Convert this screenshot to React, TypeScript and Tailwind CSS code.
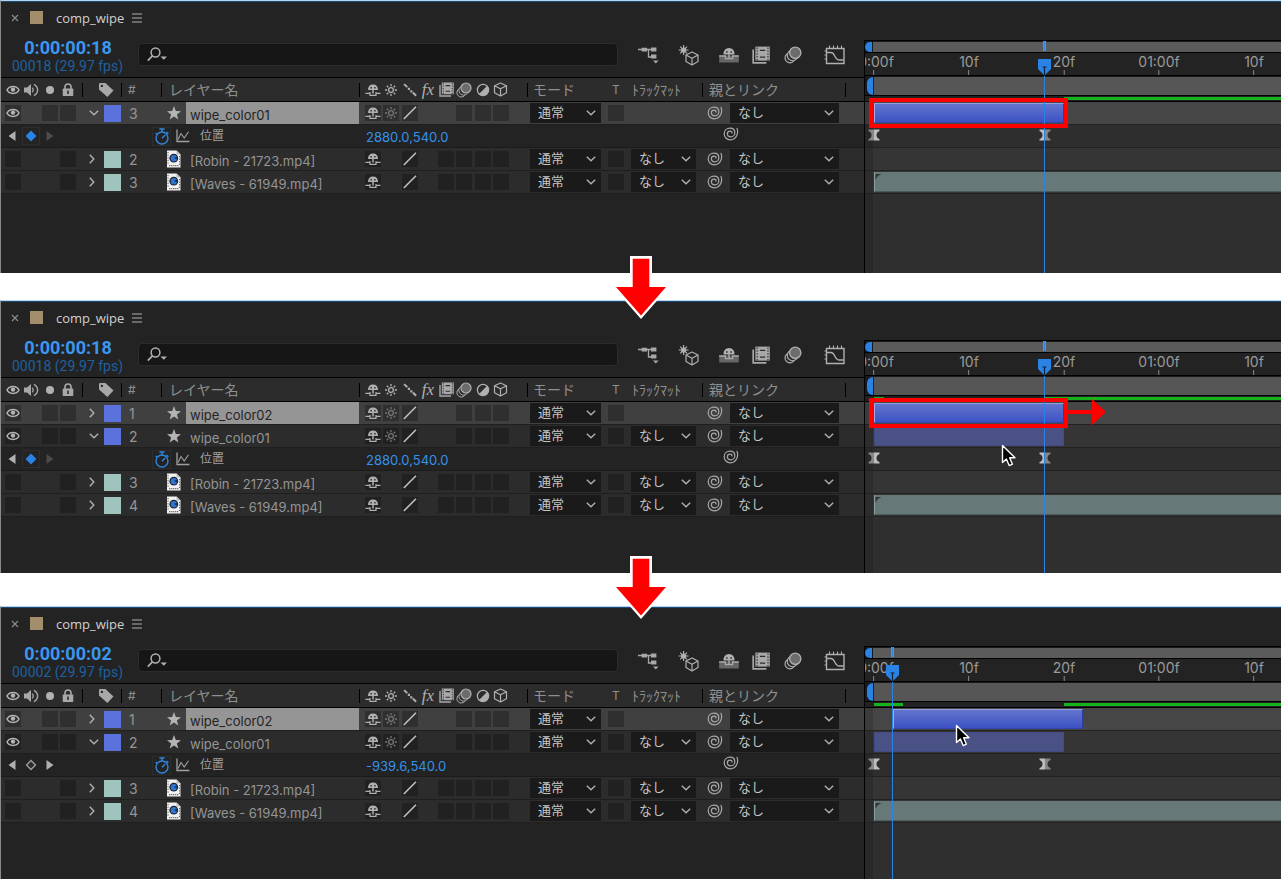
import type { CSSProperties, ReactNode } from "react"

type Layer = {
  index: number
  name: string
  kind: "shape" | "video"
  selected?: boolean
  open?: boolean
  matte?: boolean
  bar?: [number, number]
  position?: string
  onKey?: boolean
}

type Comp = {
  id: string
  time: string
  frame: string
  playhead: number
  layers: Layer[]
  cached: [number, number][]
  overlay?: ReactNode
}

// one frame is 9.5px wide, frame zero sits 9px from the edge of the time area
const FRAME = 9.5
const ORIGIN = 9
const at = (frame: number) => ORIGIN + frame * FRAME

const EyeIcon = () => (
  <svg width="14" height="12" viewBox="0 0 14 12" fill="none">
    <path d="M1 6C3.4 1.4 10.6 1.4 13 6 10.6 10.6 3.4 10.6 1 6Z" stroke="#b4b4b4" strokeWidth="1.5" />
    <circle cx="7" cy="5.6" r="2.2" fill="#b4b4b4" />
  </svg>
)

const SpeakerIcon = () => (
  <svg width="16" height="14" viewBox="0 0 16 14" fill="none" stroke="#a8a8a8">
    <path d="M1 4.5H4L8 1V13L4 9.5H1Z" fill="#a8a8a8" stroke="none" />
    <path d="M9.5 4.6Q11 7 9.5 9.4" strokeWidth="1.3" />
    <path d="M11 1.4Q14.6 3.6 14.6 7T11 12.6" strokeWidth="1.4" />
  </svg>
)

const LockIcon = () => (
  <svg width="12" height="14" viewBox="0 0 12 14" fill="none">
    <path d="M3 6V4A3 3 0 0 1 9 4V6" stroke="#a8a8a8" strokeWidth="1.6" />
    <rect x="0.7" y="5.5" width="10.6" height="7.5" rx="0.8" fill="#a8a8a8" />
    <path d="M6 7.5V11" stroke="#2c2c2c" strokeWidth="1.6" />
  </svg>
)

const TagIcon = () => (
  <svg width="16" height="16" viewBox="0 0 16 16">
    <path d="M1 2.2Q1 1 2.2 1H7.4L15.5 8.6 9.4 15 1 7.6Z" fill="#a8a8a8" />
    <circle cx="3.9" cy="3.9" r="1.2" fill="#2c2c2c" />
  </svg>
)

const StarIcon = () => (
  <svg width="14" height="14" viewBox="0 0 14 14">
    <path d="M7 0 8.8 4.9 14 5.2 9.9 8.4 11.3 13.5 7 10.6 2.7 13.5 4.1 8.4 0 5.2 5.2 4.9Z" fill="#b4b4b4" />
  </svg>
)

const VideoIcon = () => (
  <svg width="14" height="18" viewBox="0 0 14 18">
    <path d="M0 0.5H9.5L13.5 4.5V17.5H0Z" fill="#f2f2f2" />
    <path d="M9.5 0.5V4.5H13.5" fill="#bdbdbd" />
    <path d="M1 2V15M12.6 6V15" stroke="#555" strokeWidth="1" strokeDasharray="1.2 1.4" />
    <circle cx="6.8" cy="8.2" r="4.4" fill="#20242c" />
    <circle cx="6.9" cy="8.2" r="3.2" fill="#2f74d0" />
    <path d="M7 8 10.2 6.6V9.8Z" fill="#16335f" />
    <path d="M2 15.6H11.5" stroke="#777" strokeWidth="1.2" strokeDasharray="1.4 0.6" />
  </svg>
)

const ShyIcon = () => (
  <svg width="16" height="14" viewBox="0 0 16 14" fill="none" stroke="#b0b0b0">
    <path d="M3 7Q3 1.4 8 1.4T13 7Z" fill="#b0b0b0" stroke="none" />
    <path d="M5.4 4.8H6.8M9.2 4.8H10.6" stroke="#2a2a2a" strokeWidth="1.4" />
    <path d="M8 7V10.6" strokeWidth="1.5" />
    <path d="M0.5 10.4H5V9M15.5 10.4H11V9M5 10V12.4H11V10" strokeWidth="1.2" />
  </svg>
)

const SunIcon = ({ dim }: { dim?: boolean }) => (
  <svg width="14" height="14" viewBox="0 0 14 14" fill="none" stroke={dim ? "#757575" : "#b0b0b0"} strokeWidth="1.3">
    <circle cx="7" cy="7" r="2.4" />
    <path d="M7 1V3.2M7 10.8V13M1 7H3.2M10.8 7H13M2.8 2.8 4.3 4.3M9.7 9.7 11.2 11.2M11.2 2.8 9.7 4.3M4.3 9.7 2.8 11.2" />
  </svg>
)

const DottedIcon = () => (
  <svg width="14" height="14" viewBox="0 0 14 14" fill="#b0b0b0">
    <path d="M0.4 1.8 1.8 0.4 5 3.4 3.6 4.8ZM4.8 4.8H7V7H4.8ZM7.2 7.2H9.4V9.4H7.2ZM9.2 10.2 10.6 8.8 13.8 12 12.4 13.4Z" />
  </svg>
)

const SlashIcon = () => (
  <svg width="14" height="14" viewBox="0 0 14 14">
    <path d="M0.8 13 13 0.8" stroke="#c0c0c0" strokeWidth="1.6" />
  </svg>
)

const FilmIcon = ({ size = 15 }: { size?: number }) => (
  <svg width={size} height={size} viewBox="0 0 15 15" fill="none">
    <path d="M1 3V14H12" stroke="#a8a8a8" strokeWidth="1.4" />
    <rect x="2.8" y="0.5" width="12" height="11.7" fill="#a8a8a8" />
    <path d="M4.3 1.2V12M13.3 1.2V12" stroke="#2c2c2c" strokeWidth="0.9" strokeDasharray="1.2 1.2" />
    <path d="M6.6 3.6H11M6.6 9.2H11" stroke="#2c2c2c" strokeWidth="1.1" />
  </svg>
)

const BlurIcon = ({ size = 16 }: { size?: number }) => (
  <svg width={size} height={size} viewBox="0 0 16 16" fill="none" stroke="#b0b0b0">
    <circle cx="5.3" cy="10.6" r="4.4" fill="#2c2c2c" strokeWidth="1" />
    <circle cx="7.6" cy="8.4" r="4.7" fill="#2c2c2c" strokeWidth="1" />
    <circle cx="10" cy="6" r="5" fill="#6c6c6c" strokeWidth="1.2" />
  </svg>
)

const HalfIcon = () => (
  <svg width="14" height="14" viewBox="0 0 14 14">
    <circle cx="7" cy="7" r="5.6" fill="none" stroke="#b0b0b0" strokeWidth="1.3" />
    <path d="M11 3A5.6 5.6 0 0 1 3 11Z" fill="#b0b0b0" />
  </svg>
)

const CubeIcon = () => (
  <svg width="15" height="15" viewBox="0 0 15 15" fill="none" stroke="#b0b0b0" strokeWidth="1.2" strokeLinejoin="round">
    <path d="M7.5 1 13.5 3.8V10.8L7.5 14 1.5 10.8V3.8ZM1.5 3.8 7.5 6.8 13.5 3.8M7.5 6.8V14" />
  </svg>
)

const SpiralIcon = () => (
  <svg width="16" height="16" viewBox="0 0 16 16" fill="none" stroke="#a8a8a8" strokeWidth="1.2" strokeLinecap="round">
    <path d="M14 2.4C15.8 7 13.4 13.8 7.4 13.8 3.6 13.8 1.2 11 1.2 7.8 1.2 4.4 3.8 2.2 7 2.2 10 2.2 11.8 4.2 11.8 6.7 11.8 9.2 10 10.8 7.8 10.8 5.8 10.8 4.4 9.5 4.4 7.8 4.4 6.3 5.5 5.2 7 5.2 8.3 5.2 9 6 9 7" />
  </svg>
)

const StopwatchIcon = () => (
  <svg width="16" height="17" viewBox="0 0 16 17" fill="none" stroke="#2f86dc">
    <circle cx="8" cy="10" r="6" strokeWidth="1.4" />
    <path d="M8 10.2 11.2 7M5.4 1H10.6M8 1V4M12.4 4 14.4 5.8M2.8 5 1.6 6" strokeWidth="1.4" />
  </svg>
)

const CurveIcon = () => (
  <svg width="14" height="14" viewBox="0 0 14 14" fill="none" stroke="#a0a0a0">
    <path d="M1 0.5V12.5H13.5" strokeWidth="1.3" />
    <path d="M2 10.5 5 4.5 8.2 9 12.5 2.8" strokeWidth="1.1" />
  </svg>
)

const Chevron = ({ className = "" }: { className?: string }) => (
  <svg width="10" height="6" viewBox="0 0 10 6" className={className} fill="none" stroke="#b0b0b0" strokeWidth="1.4">
    <path d="M0.8 0.8 5 4.8 9.2 0.8" />
  </svg>
)

const FlowchartIcon = () => (
  <svg width="22" height="20" viewBox="0 0 22 20" fill="none" stroke="#a8a8a8">
    <path d="M0 4.5H7M9 4.5H14M10.5 5V12H14" strokeWidth="1.3" />
    <path d="M3.6 2.8H9V6.4H3.6ZM13 2.6H18.4V6.6H13ZM13 9.6H18.4V13.6H13Z" fill="#a8a8a8" stroke="none" />
    <path d="M15 15.4H20.6L17.8 18.4Z" fill="#a8a8a8" stroke="none" />
  </svg>
)

const DraftIcon = () => (
  <svg width="22" height="22" viewBox="0 0 22 22" fill="none" stroke="#b0b0b0" strokeWidth="1.2" strokeLinejoin="round">
    <path d="M14 8 20 11V17.6L14 21 8 17.6V11ZM8 11 14 14.2 20 11M14 14.2V21" />
    <circle cx="5.6" cy="6" r="2.6" fill="#b0b0b0" stroke="none" />
    <path d="M5.6 1V11M0.6 6H10.6M2.2 2.6 9 9.4M9 2.6 2.2 9.4" />
  </svg>
)

const HideShyIcon = () => (
  <svg width="22" height="18" viewBox="0 0 22 18" fill="none">
    <path d="M1.2 9.5H20.8V16.5H1.2Z" fill="#666" />
    <path d="M5.5 8.5Q5.5 2 11 2T16.5 8.5Z" fill="#b0b0b0" />
    <path d="M8.2 6H9.6M12.4 6H13.8" stroke="#232323" strokeWidth="1.3" />
    <path d="M1.2 10H7.4V12.6H14.6V10H20.8" stroke="#a8a8a8" strokeWidth="1.3" />
    <path d="M11 8V12.6" stroke="#a8a8a8" strokeWidth="1.4" />
  </svg>
)

const GraphIcon = () => (
  <svg width="22" height="20" viewBox="0 0 22 20" fill="none" stroke="#b0b0b0">
    <path d="M2.5 3.5H20V18.5H2.5Z" strokeWidth="1.4" />
    <path d="M5.5 0.5V3M9.5 0.5V3M13.5 0.5V3M17.5 0.5V3M0.5 6H2M0.5 10H2M0.5 14H2" strokeWidth="1.1" />
    <path d="M3 7.5H7C11.5 7.5 10 15 15.5 15H19.5" strokeWidth="1.3" />
  </svg>
)

const Keyframe = ({ frame, flip }: { frame: number; flip?: boolean }) => (
  <svg width="12" height="12" viewBox="0 0 12 12" className="absolute top-[3px] -translate-x-1/2" style={{ left: at(frame) }}>
    <path d="M0.5 0.5H6V11.5H0.5V10Q3.5 9 3.5 6T0.5 2Z" fill={flip ? "#bdbdbd" : "#868686"} />
    <path d="M11.5 0.5H6V11.5H11.5V10Q8.5 9 8.5 6T11.5 2Z" fill={flip ? "#868686" : "#bdbdbd"} />
  </svg>
)

const Cursor = ({ className }: { className: string }) => (
  <svg width="16" height="24" viewBox="0 0 16 24" className={`absolute ${className}`}>
    <path d="M1.5 1.5V18.6L5.4 15 8.2 21.6 11.4 20.2 8.6 13.8H14Z" fill="#000" stroke="#fff" strokeWidth="1.4" strokeLinejoin="round" />
  </svg>
)

const Box = ({ label, lit, children }: { label: string; lit?: boolean; children?: ReactNode }) => (
  <button aria-label={label} className={`flex size-4 items-center justify-center ${lit ? "bg-[#2f2f2f]" : "bg-[#212121]"}`}>
    {children}
  </button>
)

const Picker = ({ label, options, className = "" }: { label: string; options: string[]; className?: string }) => (
  <div className={`relative h-5 bg-[#1a1a1a] ${className}`}>
    <select aria-label={label} className="block h-5 w-full appearance-none pb-0.5 pl-2 text-[13px] leading-4 text-[#c4c4c4]">
      {options.map((o) => (
        <option key={o}>{o}</option>
      ))}
    </select>
    <Chevron className="pointer-events-none absolute right-[5px] top-[7px]" />
  </div>
)

const Head = ({ children, line, className = "" }: { children?: ReactNode; line?: boolean; className?: string }) => (
  <th scope="col" className="h-[24px] border-b border-black p-0 font-normal">
    <div className="flex h-[22px] items-center">
      {line && <span className="h-3.5 w-px bg-black" />}
      <div className={`flex flex-1 items-center ${className}`}>{children}</div>
    </div>
  </th>
)

const LayerRow = ({ layer }: { layer: Layer }) => {
  const shape = layer.kind === "shape"
  const lit = layer.selected
  return (
    <tr className={lit ? "bg-[#404040]" : "bg-[#2c2c2c]"}>
      <td className="h-[23px] border-b border-[#1f1f1f] p-0">
        <div className="ml-1 grid w-[73px] grid-cols-4">
          <Box label="Video" lit={lit}>{shape && <EyeIcon />}</Box>
          <span />
          {shape ? <Box label="Solo" lit={lit} /> : <span />}
          <Box label="Lock" lit={lit} />
        </div>
      </td>
      <td className="border-b border-[#1f1f1f] p-0">
        <div className="flex items-center justify-between">
          <button aria-label="Expand layer" className={`flex w-3 justify-center ${layer.open ? "ml-1.5" : "ml-1"}`}>
            <Chevron className={layer.open ? "" : "-rotate-90"} />
          </button>
          <button aria-label="Label color" className={`h-[17px] w-[17px] ${shape ? "bg-[#5b72dc]" : "bg-[#9fc4be]"}`} />
        </div>
      </td>
      <td className="border-b border-[#1f1f1f] p-0 pl-2 pt-0.5 text-[14px] leading-5 text-[#959595]">{layer.index}</td>
      <td className="border-b border-[#1f1f1f] p-0">
        <div className="flex h-[22px] items-center">
          <span className="flex w-[25px] pl-1.5">{shape ? <StarIcon /> : <VideoIcon />}</span>
          <span className={`flex h-[22px] flex-1 items-center pl-1 pt-[3px] text-[13px] leading-4 ${lit ? "bg-[#959595] text-[#242424]" : "text-[#959595]"}`}>
            {layer.name}
          </span>
        </div>
      </td>
      <td className="border-b border-[#1f1f1f] p-0">
        <div className="ml-1.5 grid w-[146px] grid-cols-8">
          <Box label="Shy" lit={lit}><ShyIcon /></Box>
          {shape ? <Box label="Collapse" lit={lit}><SunIcon dim /></Box> : <span />}
          <Box label="Quality" lit={lit}><SlashIcon /></Box>
          <span />
          {shape ? <span /> : <Box label="Frame blending" />}
          <Box label="Motion blur" lit={lit} />
          <Box label="Adjustment layer" lit={lit} />
          <Box label="3D layer" lit={lit} />
        </div>
      </td>
      <td className="border-b border-[#1f1f1f] p-0">
        <Picker label="モード" options={["通常"]} className="ml-[3px] w-[71px]" />
      </td>
      <td className="border-b border-[#1f1f1f] p-0 pl-[5px]">
        <Box label="Preserve transparency" lit={lit} />
      </td>
      <td className="border-b border-[#1f1f1f] p-0">
        {layer.matte && <Picker label="トラックマット" options={["なし"]} className="ml-1 w-[65px]" />}
      </td>
      <td className="border-b border-[#1f1f1f] p-0">
        <div className="flex items-center pl-[5px]">
          <button aria-label="Pick whip" className="mr-[7px]"><SpiralIcon /></button>
          <Picker label="親とリンク" options={["なし"]} className="w-[109px]" />
        </div>
      </td>
      <td className="border-b border-[#1f1f1f] p-0" />
    </tr>
  )
}

const PropertyRow = ({ layer }: { layer: Layer }) => (
  <tr className="bg-[#232323]">
    <td className="h-[23px] border-b border-[#1b1b1b] p-0">
      <div className="flex items-center pl-[7px]">
        <button aria-label="Previous keyframe" className="flex w-3.5">
          <svg width="8" height="10" viewBox="0 0 8 10"><path d="M7.5 0V10L0.5 5Z" fill="#b0b0b0" /></svg>
        </button>
        <button aria-label="Toggle keyframe" className={`flex size-[18px] items-center justify-center border ${layer.onKey ? "border-[#2d2d2d]" : "border-transparent"}`}>
          <svg width="12" height="12" viewBox="0 0 12 12">
            {layer.onKey ? (
              <path d="M6 0.5 11.5 6 6 11.5 0.5 6Z" fill="#2a82e4" />
            ) : (
              <path d="M6 1.5 10.5 6 6 10.5 1.5 6Z" fill="#2a2a2a" stroke="#a0a0a0" strokeWidth="1.3" />
            )}
          </svg>
        </button>
        <button aria-label="Next keyframe" className="ml-1.5 flex">
          <svg width="8" height="10" viewBox="0 0 8 10"><path d="M0.5 0V10L7.5 5Z" fill={layer.onKey ? "#4a4a4a" : "#b0b0b0"} /></svg>
        </button>
      </div>
    </td>
    <td colSpan={3} className="border-b border-[#1b1b1b] p-0">
      <div className="flex items-center pl-[70px]">
        <button aria-label="Stopwatch" className="flex w-[19px] justify-center border border-[#2d2d2d]"><StopwatchIcon /></button>
        <button aria-label="Graph" className="ml-[5px]"><CurveIcon /></button>
        <span className="ml-2.5 text-[12px] leading-4 text-[#a0a0a0]">位置</span>
      </div>
    </td>
    <td className="border-b border-[#1b1b1b] p-0 pl-[7px]">
      <button className="block pt-0.5 text-[13px] leading-4 text-[#3592ea]">{layer.position}</button>
    </td>
    <td colSpan={3} className="border-b border-[#1b1b1b] p-0" />
    <td className="border-b border-[#1b1b1b] p-0 pl-[21px]">
      <button aria-label="Pick whip" className="block pb-1"><SpiralIcon /></button>
    </td>
    <td className="border-b border-[#1b1b1b] p-0" />
  </tr>
)

const LayerTable = ({ layers }: { layers: Layer[] }) => (
  <table className="w-full table-fixed border-separate border-spacing-0 border-t border-black text-left">
    <colgroup>
      <col className="w-[81px]" />
      <col className="w-[39px]" />
      <col className="w-[40px]" />
      <col />
      <col className="w-[168px]" />
      <col className="w-[76px]" />
      <col className="w-[24px]" />
      <col className="w-[75px]" />
      <col className="w-[143px]" />
      <col className="w-[19px]" />
    </colgroup>
    <thead className="bg-[#2c2c2c] text-[14px] leading-5 text-[#8f8f8f]">
      <tr>
        <Head>
          <div className="ml-[3px] grid w-[73px] grid-cols-4 items-center justify-items-center">
            <EyeIcon />
            <SpeakerIcon />
            <span className="size-2 rounded-full bg-[#b0b0b0]" />
            <LockIcon />
          </div>
        </Head>
        <Head line className="pl-[15px]"><TagIcon /></Head>
        <Head line className="pl-1.5 text-[12px]">#</Head>
        <Head line className="pl-[7px]">レイヤー名</Head>
        <Head line>
          <div className="ml-1 grid w-[146px] grid-cols-8 items-center justify-items-center">
            <ShyIcon />
            <SunIcon />
            <DottedIcon />
            <i className="font-['Liberation_Serif',serif] text-[17px] leading-4 text-[#b0b0b0]">fx</i>
            <FilmIcon />
            <BlurIcon />
            <HalfIcon />
            <CubeIcon />
          </div>
        </Head>
        <Head line className="pl-[5px]">モード</Head>
        <Head className="pl-[9px] text-[12px]">T</Head>
        <Head className="pl-[5px] whitespace-nowrap">ﾄﾗｯｸﾏｯﾄ</Head>
        <Head line className="pl-1.5">親とリンク</Head>
        <Head line />
      </tr>
    </thead>
    <tbody>
      {layers.map((layer) => [
        <LayerRow key={layer.name} layer={layer} />,
        layer.open && <PropertyRow key={layer.name + "-position"} layer={layer} />,
      ])}
    </tbody>
  </table>
)

const ticks = [
  { frame: 0, text: "0:00f" },
  { frame: 10, text: "10f" },
  { frame: 20, text: "20f" },
  { frame: 30, text: "01:00f" },
  { frame: 40, text: "10f" },
]

const Bar = ({ layer }: { layer: Layer }) => {
  if (!layer.bar) return null
  const [start, end] = layer.bar
  const style: CSSProperties = { marginLeft: at(start), width: (end - start) * FRAME }
  if (layer.kind === "video")
    return (
      <div style={style} className="relative h-5 border-b border-l border-b-[#4d5a5a] border-l-[#8a9c9c] bg-[#667878]">
        <svg width="7" height="7" viewBox="0 0 7 7" className="absolute left-0 top-0.5">
          <path d="M0.5 0H6.5Q2 1.5 0.5 6Z" fill="#333" />
        </svg>
      </div>
    )
  return layer.selected ? (
    <div style={style} className="h-5 border border-t-[#93a0dc] border-r-[#2c3f9c] border-b-[#3346b0] border-l-[#a3aee2] bg-linear-to-b from-[#6474cc] to-[#3c52c4]" />
  ) : (
    <div style={style} className="h-5 border border-[#434b86] bg-[#4a5184]" />
  )
}

const Track = ({ className, children }: { className: string; children?: ReactNode }) => (
  <div className={`relative h-[23px] border-b border-[#222] pt-px ${className}`}>
    <div className="absolute inset-y-0 left-0 w-2 bg-black/15" />
    <div className="relative">{children}</div>
  </div>
)

const TimeArea = ({ comp }: { comp: Comp }) => (
  <div className="relative mt-[38px] flex min-w-0 flex-1 flex-col overflow-hidden border-l border-black bg-[#2f2f2f]">
    <div className="flex h-[13px] items-center border-y border-black bg-[#1a1a1a]">
      <span className="h-2.5 w-[7px] rounded-l-full bg-[#2a82e4]" />
      <span className="ml-px h-2.5 flex-1 bg-[#5b5b5b]" />
    </div>
    <div className="relative h-[23px] overflow-hidden border-b border-black bg-[#232323] text-[14px] text-[#9a9a9a]">
      {ticks.map((t) => (
        <div key={t.frame} className="group absolute inset-y-0 flex -translate-x-1/2 flex-col items-center" style={{ left: at(t.frame) }}>
          <span className="h-[17px] leading-[18px] group-first:pl-1">{t.text}</span>
          <span className="h-[5px] w-px bg-[#8a8a8a]" />
        </div>
      ))}
    </div>
    <div className="flex h-5 border-b border-black bg-[#1a1a1a] pt-px">
      <span className="ml-0.5 h-[18px] w-1.5 rounded-l-md bg-[#2a82e4]" />
      <span className="ml-px h-[18px] flex-1 bg-[#565656]" />
    </div>
    <div className="relative h-1.5 border-b border-black bg-[#222]">
      {comp.cached.map(([start, end]) => (
        <span key={start} className="absolute top-px h-[3px] bg-[#16b41c]" style={{ left: at(start), width: (end - start) * FRAME }} />
      ))}
    </div>
    {comp.layers.map((layer) => (
      <div key={layer.name}>
        <Track className={layer.selected ? "bg-[#464646]" : "bg-[#353535]"}>
          <Bar layer={layer} />
        </Track>
        {layer.open && (
          <Track className="bg-[#2e2e2e]">
            <Keyframe frame={0} />
            <Keyframe frame={18} flip />
          </Track>
        )}
      </div>
    ))}
    <div className="w-2 flex-1 bg-black/15" />
    <div className="absolute inset-y-0 -ml-[7px] w-[13px]" style={{ left: at(comp.playhead) }}>
      <span className="absolute left-[5px] top-px h-2.5 w-[3px] border-x border-[#8a8a8a] bg-[#2a82e4]" />
      <svg width="13" height="17" viewBox="0 0 13 17" className="absolute top-[19px]">
        <path d="M0 0H13V10L6.5 16.5 0 10Z" fill="#2a82e4" />
        <path d="M4.5 8H8.5M6.5 8V16" stroke="#10233c" strokeWidth="1.2" />
      </svg>
      <span className="absolute bottom-0 left-1.5 top-9 w-px bg-[#2a82e4]" />
    </div>
  </div>
)

const CompPanel = ({ comp }: { comp: Comp }) => (
  <section className="relative flex min-h-[273px] flex-col border-l border-t border-l-[#8a8a8a] border-t-[#b4d4ee] bg-[#232323]">
    <div className="h-px bg-[#1d4b78]" />
    <div className="flex flex-1">
      <div className="w-[863px] shrink-0">
        <div className="flex h-8 items-center pl-2.5">
          <button aria-label="Close tab" className="flex">
            <svg width="8" height="8" viewBox="0 0 8 8"><path d="M1 1 7 7M7 1 1 7" stroke="#8a8a8a" strokeWidth="1.2" /></svg>
          </button>
          <span className="mb-0.5 ml-[11px] size-[13px] bg-[#a38d6c]" />
          <h2 className="ml-[13px] w-16 font-['Open_Sans',sans-serif] text-[13px] leading-4 text-[#d0d0d0]">comp_wipe</h2>
          <button aria-label="Panel menu" className="ml-3">
            <svg width="10" height="10" viewBox="0 0 10 10"><path d="M0 1H10M0 5H10M0 9H10" stroke="#b0b0b0" strokeWidth="1.2" /></svg>
          </button>
        </div>
        <div className="flex h-[43px] items-start pt-0.5">
          <div className="w-[137px] whitespace-nowrap pl-[11px] pt-[3px] font-['Roboto',sans-serif]">
            <button className="block w-[112px] text-center text-[18px] font-bold leading-[18px] text-[#3a97f0]">{comp.time}</button>
            <p className="text-[14px] leading-[18px] text-[#1f609f]">{comp.frame} (29.97 fps)</p>
          </div>
          <div className="mt-[7px] flex h-[23px] flex-1 items-center rounded-sm border border-[#2c2c2c] bg-[#161616] pl-2">
            <svg width="21" height="15" viewBox="0 0 21 15" fill="none">
              <circle cx="8.5" cy="5.5" r="4.4" stroke="#b0b0b0" strokeWidth="1.5" />
              <path d="M5.4 8.8 0.8 13.6" stroke="#b0b0b0" strokeWidth="1.7" />
              <path d="M13.5 9.5H20L16.8 12.8Z" fill="#b0b0b0" />
            </svg>
            <input aria-label="Search layers" className="h-full min-w-0 flex-1 bg-transparent px-1 text-[13px] text-[#c4c4c4] outline-none" />
          </div>
          <div className="mr-[18px] mt-2 flex h-[22px] items-center pl-5">
            <button aria-label="Flowchart"><FlowchartIcon /></button>
            <button aria-label="Draft 3D" className="ml-[18px]"><DraftIcon /></button>
            <button aria-label="Hide shy layers" className="ml-[18px]"><HideShyIcon /></button>
            <button aria-label="Frame blending" className="ml-2.5 flex w-[22px] justify-center"><FilmIcon size={18} /></button>
            <button aria-label="Motion blur" className="ml-2.5 flex w-[22px] justify-center"><BlurIcon size={18} /></button>
            <button aria-label="Graph editor" className="ml-5"><GraphIcon /></button>
          </div>
        </div>
        <LayerTable layers={comp.layers} />
      </div>
      <TimeArea comp={comp} />
    </div>
    {comp.overlay}
  </section>
)

const DownArrow = ({ className }: { className: string }) => (
  <div className={`relative z-10 ${className}`}>
    <svg width="60" height="66" viewBox="0 0 60 66" className="absolute -top-[18px] left-1/2 -translate-x-1/2">
      <path d="M19 1H41V32H58L30 64 2 32H19Z" fill="#fff" />
      <path d="M21.7 3.8H38.3V32H55L30 60.5 5 32H21.7Z" fill="#f00" />
    </svg>
  </div>
)

// red frame around the clip that is being edited
const Highlight = () => <div className="absolute left-[868px] top-[97px] h-[30px] w-[199px] border-4 border-[#f00]" />

const footage = (first: number): Layer[] => [
  { index: first, name: "[Robin - 21723.mp4]", kind: "video", matte: true },
  { index: first + 1, name: "[Waves - 61949.mp4]", kind: "video", matte: true, bar: [0, 300] },
]

const comps: Comp[] = [
  {
    id: "animate",
    time: "0:00:00:18",
    frame: "00018",
    playhead: 18,
    cached: [[20, 300]],
    layers: [
      { index: 3, name: "wipe_color01", kind: "shape", selected: true, open: true, bar: [0, 20], position: "2880.0,540.0", onKey: true },
      ...footage(2),
    ],
    overlay: <Highlight />,
  },
  {
    id: "duplicate",
    time: "0:00:00:18",
    frame: "00018",
    playhead: 18,
    cached: [[0, 1], [18, 300]],
    layers: [
      { index: 1, name: "wipe_color02", kind: "shape", selected: true, bar: [0, 20] },
      { index: 2, name: "wipe_color01", kind: "shape", open: true, matte: true, bar: [0, 20], position: "2880.0,540.0", onKey: true },
      ...footage(3),
    ],
    overlay: (
      <>
        <Highlight />
        <svg width="38" height="26" viewBox="0 0 38 26" className="absolute left-[1067px] top-[98px]">
          <path d="M0 11H24V0L38 13 24 26V15H0Z" fill="#f00" />
        </svg>
        <Cursor className="left-[1000px] top-[143px]" />
      </>
    ),
  },
  {
    id: "shift",
    time: "0:00:00:02",
    frame: "00002",
    playhead: 2,
    cached: [[0, 3], [20, 300]],
    layers: [
      { index: 1, name: "wipe_color02", kind: "shape", selected: true, bar: [2, 22] },
      { index: 2, name: "wipe_color01", kind: "shape", open: true, matte: true, bar: [0, 20], position: "-939.6,540.0" },
      ...footage(3),
    ],
    overlay: <Cursor className="left-[954px] top-[117px]" />,
  },
]

const App = () => {
  return (
    <main className="overflow-hidden bg-white font-['Inter','Noto_Sans_CJK_JP',sans-serif]">
      {comps.map((comp, i) => (
        <div key={comp.id}>
          {i > 0 && <DownArrow className={i === 1 ? "h-[27px]" : "h-[33px]"} />}
          <CompPanel comp={comp} />
        </div>
      ))}
    </main>
  )
}

export default App
